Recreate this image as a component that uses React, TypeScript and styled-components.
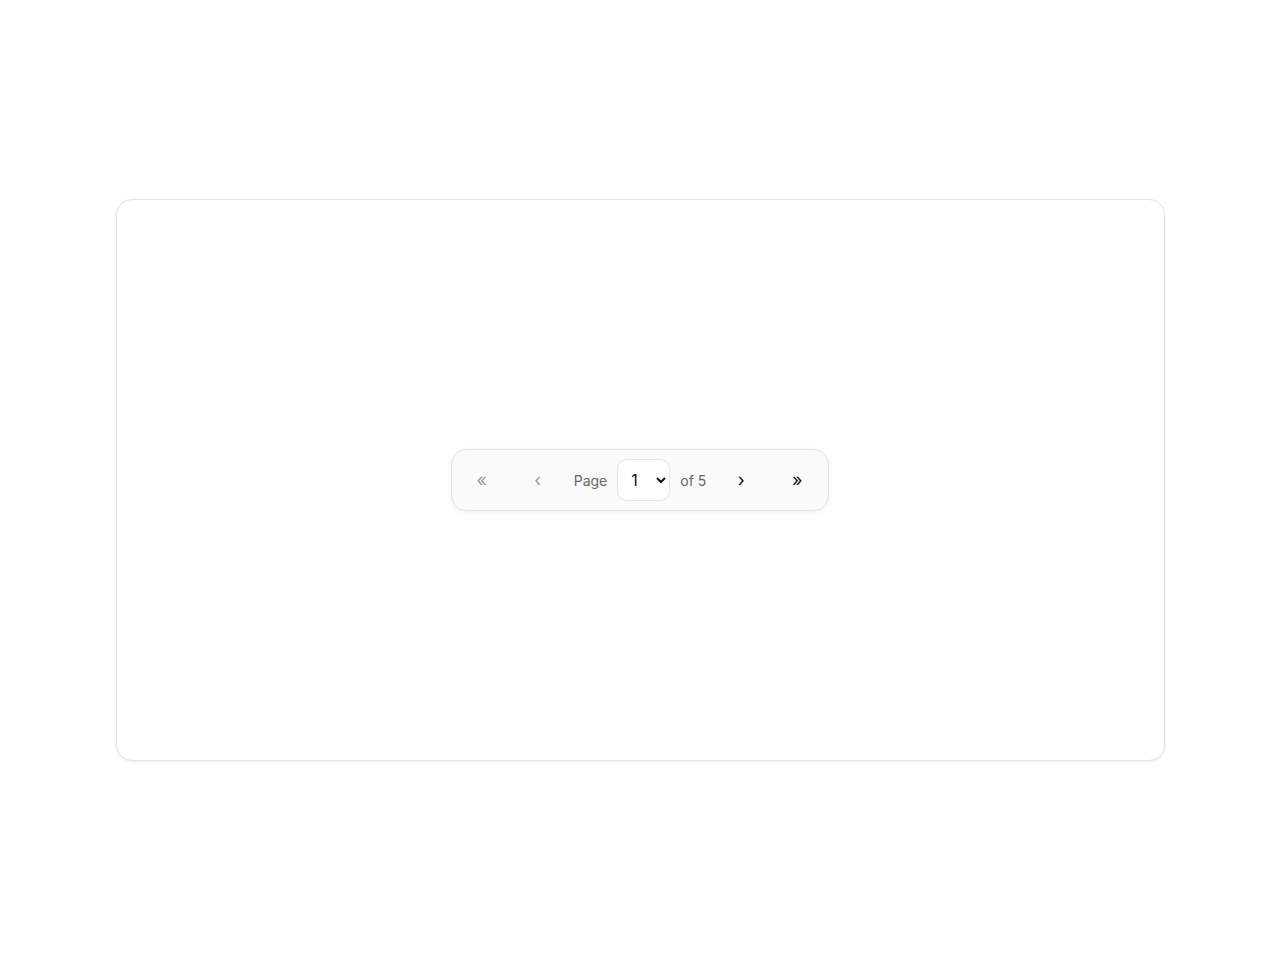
import React, { useState } from 'react'
import styled, { createGlobalStyle } from 'styled-components'

const GlobalStyle = createGlobalStyle`
  * { box-sizing: border-box; }
  html, body { margin: 0; padding: 0; background: #ffffff; }
  body { font-family: Inter, "Noto Sans", sans-serif; }
`

const TOTAL = 5

const App: React.FC = () => {
  const [page, setPage] = useState(1)

  const first = page <= 1
  const last = page >= TOTAL

  return (
    <>
      <GlobalStyle />
      <Screen>
        <Card>
          <Pager>
            <NavButton $w={40} disabled={first} $muted={first} onClick={() => setPage(1)}>«</NavButton>
            <NavButton $w={52} disabled={first} $muted={first} onClick={() => setPage(page - 1)}>‹</NavButton>
            <Label>Page</Label>
            <PageSelect value={page} onChange={(e) => setPage(Number(e.target.value))}>
              {Array.from({ length: TOTAL }, (_, i) => (
                <option key={i} value={i + 1}>{i + 1}</option>
              ))}
            </PageSelect>
            <Label>of {TOTAL}</Label>
            <NavButton $w={50} disabled={last} $muted={last} onClick={() => setPage(page + 1)}>›</NavButton>
            <NavButton $w={42} disabled={last} $muted={last} onClick={() => setPage(TOTAL)}>»</NavButton>
          </Pager>
        </Card>
      </Screen>
    </>
  )
}

export default App

const Screen = styled.div`
  width: 100%;
  height: 960px;
  display: flex;
  align-items: center;
  justify-content: center;
`

const Card = styled.div`
  width: 1049px;
  height: 562px;
  border: 1px solid #e4e4e4;
  border-radius: 16px;
  background: #ffffff;
  box-shadow: 0 1px 3px rgba(0, 0, 0, 0.08);
  display: flex;
  align-items: center;
  justify-content: center;
`

const Pager = styled.div`
  display: flex;
  align-items: center;
  gap: 10px;
  padding: 9px 10px;
  background: #fafafa;
  border: 1px solid #e6e6e6;
  border-radius: 16px;
  box-shadow: 0 1px 4px rgba(0, 0, 0, 0.08);
`

const NavButton = styled.button<{ $muted?: boolean; $w: number }>`
  width: ${(p) => p.$w}px;
  height: 42px;
  padding: 0;
  border: none;
  background: transparent;
  border-radius: 10px;
  font-family: Inter, "Noto Sans", sans-serif;
  font-size: 18px;
  line-height: 1;
  color: ${(p) => (p.$muted ? '#9a9a9a' : '#111111')};
  cursor: ${(p) => (p.$muted ? 'default' : 'pointer')};
  display: flex;
  align-items: center;
  justify-content: center;
`

const Label = styled.span`
  font-size: 14px;
  color: #666666;
  white-space: nowrap;
`

const PageSelect = styled.select`
  width: 53px;
  height: 42px;
  padding: 0 4px 0 9px;
  border: 1px solid #e4e4e4;
  border-radius: 10px;
  background: #ffffff;
  font-family: Inter, "Noto Sans", sans-serif;
  font-size: 16px;
  color: #111111;
`
